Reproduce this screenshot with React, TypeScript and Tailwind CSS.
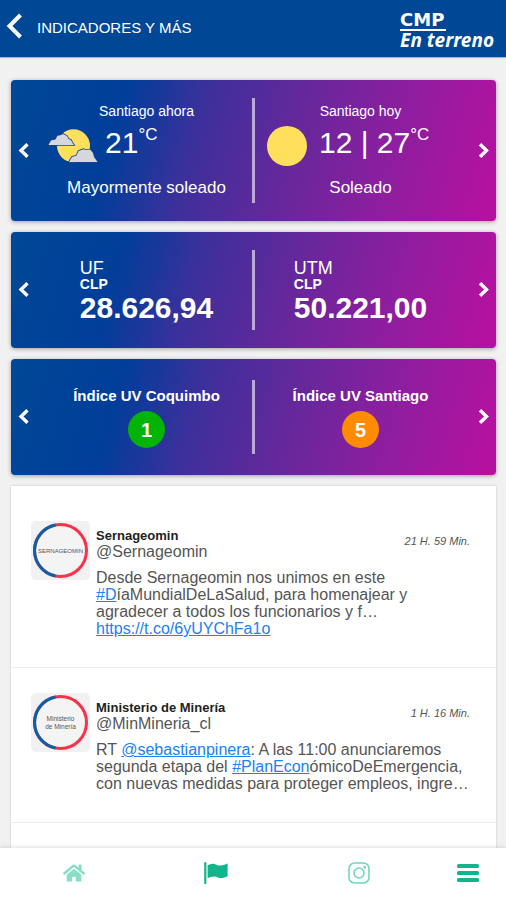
import type { ReactNode } from "react";
import { FaHome } from "react-icons/fa";

function Chevron({ dir }: { dir: "left" | "right" }) {
  return (
    <svg width="11" height="16" viewBox="0 0 11 16" fill="none" stroke="#fff" strokeWidth="3.4" aria-hidden="true">
      <path d={dir === "left" ? "M9.5 1.2 3 7.500l6.500 6.200" : "M2 1.200 8.500 7.500 2 13.700"} />
    </svg>
  );
}

function SlideCard({ left, right, divider }: { left: ReactNode; right: ReactNode; divider: string }) {
  return (
    <section className="flex items-stretch rounded bg-[linear-gradient(105deg,#004896_0%,#003e9a_22%,#1c379b_30%,#3c309b_38%,#5a2a9b_52%,#8a1f9f_75%,#b5119f_98%)] text-white shadow-[0_1px_4px_rgba(0,0,0,0.35)]">
      <button type="button" aria-label="Anterior" className="flex w-[30px] items-center pl-[7px]">
        <Chevron dir="left" />
      </button>
      <div className="min-w-0 flex-1">{left}</div>
      <div className={`w-[3px] bg-white/60 ${divider}`} />
      <div className="min-w-0 flex-1">{right}</div>
      <button type="button" aria-label="Siguiente" className="flex w-[30px] items-center justify-end pr-[7px]">
        <Chevron dir="right" />
      </button>
    </section>
  );
}

function Weather({ title, icon, temp, text }: { title: string; icon: ReactNode; temp: string; text: string }) {
  return (
    <div className="flex flex-col py-[23px]">
      <h2 className="text-center text-[14px] leading-[16px]">{title}</h2>
      <div className="mt-[7px] flex h-10 items-start">
        <div className="flex h-10 w-16 items-center justify-center">{icon}</div>
        <p className="flex items-start text-[30px] leading-[34px]">
          {temp}
          <span className="text-[17px] leading-[17px]">°C</span>
        </p>
      </div>
      <p className="mt-[12px] text-center text-[17px] leading-[20px]">{text}</p>
    </div>
  );
}

function Currency({ name, value }: { name: string; value: string }) {
  return (
    <div className="flex justify-center pt-[27px] pb-[24px]">
      <div>
        <h2 className="text-[18px] leading-[18px]">{name}</h2>
        <p className="text-[14px] leading-[15px] font-bold">CLP</p>
        <p className="text-[30px] leading-[32px] font-bold">{value}</p>
      </div>
    </div>
  );
}

function UvIndex({ city, value, color }: { city: string; value: number; color: string }) {
  return (
    <div className="flex flex-col items-center py-[27px]">
      <h2 className="text-[15px] leading-[20px] font-bold">Índice UV {city}</h2>
      <p className={`mt-[5px] flex size-[37px] items-center justify-center rounded-full text-[20px] leading-[20px] font-bold ${color}`}>
        {value}
      </p>
    </div>
  );
}

function CloudySun() {
  return (
    <svg width="50" height="34" viewBox="0 0 50 34" aria-hidden="true">
      <circle cx="25.500" cy="16.800" r="16.500" fill="#ffdf5c" />
      <g fill="#d6d7dc" stroke="#1f3f96" strokeWidth="1.600" style={{ paintOrder: "stroke" }}>
        <path d="M.5 16 3 11.500l4.500-1 2-3.800 3-.5 2.500-1.200 4 2 1.500 3 2.500 1 1.500 3 1.500 2z" />
        <path d="M21 33l3-5 4.500-1.500L30.500 22l5-1.800 2 .8 4.500-.5 3 3.500 1 4 3.500 5z" />
      </g>
    </svg>
  );
}

function Sun() {
  return (
    <svg width="40" height="40" viewBox="0 0 40 40" aria-hidden="true">
      <circle cx="20" cy="20" r="20" fill="#ffdf5c" />
    </svg>
  );
}

function Avatar({ lines }: { lines: string[] }) {
  return (
    <div className="grid size-[59px] shrink-0 place-items-center rounded-[5px] bg-[#f1f1f2]">
      <svg width="59" height="59" viewBox="0 0 59 59" aria-hidden="true">
        <circle cx="29.500" cy="29.500" r="26" fill="#f4f4f5" stroke="#fa3148" strokeWidth="3" />
        <path d="M24.500 4A26 26 0 0 0 24.500 55" fill="none" stroke="#0f5fa6" strokeWidth="3" />
        {lines.map((line, i) => (
          <text
            key={line}
            x="29.500"
            y={lines.length === 1 ? 32 : 28 + i * 8}
            textAnchor="middle"
            fontSize={lines.length === 1 ? 6 : 6.5}
            fontFamily="Liberation Sans, sans-serif"
            fill="#555"
          >
            {line}
          </text>
        ))}
      </svg>
    </div>
  );
}

function Tweet({ avatar, name, handle, time, children }: {
  avatar: string[]; name: string; handle: string; time: string; children: ReactNode;
}) {
  return (
    <article className="flex gap-[6px] border-b border-[#ececec] pt-[25px] pr-[26px] pb-[30px] pl-[20px]">
      <Avatar lines={avatar} />
      <div className="min-w-0 flex-1 pt-[7px]">
        <div className="flex justify-between">
          <div>
            <h3 className="text-[13px] leading-[16px] font-bold text-[#222]">{name}</h3>
            <p className="text-[16px] leading-[16px] text-[#555]">{handle}</p>
          </div>
          <time className="mt-[6px] text-[11px] leading-[14px] text-[#555] italic">{time}</time>
        </div>
        <p className="mt-[9px] text-[16px] leading-[17px] whitespace-nowrap text-[#555]">{children}</p>
      </div>
    </article>
  );
}

function Link({ children }: { children: ReactNode }) {
  return <a href="#" className="text-[#2080f5] underline">{children}</a>;
}

function FlagIcon() {
  return (
    <svg width="24" height="22" viewBox="0 0 24 22" fill="#12b48b" aria-hidden="true">
      <path d="M.2 1.200a1.100 1.100 0 0 1 2.200 0V21a1.100 1.100 0 0 1-2.200 0z" />
      <path d="M3.600 3.200C6 2 8.500 1.300 11 2.200c2 .7 3 1.400 5 1.300 2.500 0 5-1 7.600-2v12.800c-2.600 1.200-5 2-7.600 1.700-2.200-.2-3.200-1.300-5.400-1.500-2.400-.2-4.600.6-7 1.700z" />
    </svg>
  );
}

function CameraIcon() {
  return (
    <svg width="22" height="22" viewBox="0 0 22 22" fill="none" stroke="#6fd6b7" strokeWidth="1.500" aria-hidden="true">
      <rect x="1" y="1" width="20" height="20" rx="5.500" />
      <circle cx="11" cy="11" r="5" />
      <circle cx="16.800" cy="5.200" r=".6" />
    </svg>
  );
}

function MenuIcon() {
  return (
    <svg width="22" height="20" viewBox="0 0 22 20" fill="#12b48b" aria-hidden="true">
      <rect y="1" width="22" height="4" rx="1.500" />
      <rect y="8" width="22" height="4" rx="1.500" />
      <rect y="15" width="22" height="4" rx="1.500" />
    </svg>
  );
}

export default function App() {
  return (
    <div className="flex h-dvh flex-col bg-[#f1f1f1] font-['Liberation_Sans',Arial,sans-serif]">
      <header className="flex h-[57px] shrink-0 items-center bg-[#004896] pr-[12px] pl-[6px] text-white shadow-[0_1px_1px_rgba(0,0,0,0.25)]">
        <button type="button" aria-label="Volver" className="pb-[6px]">
          <svg width="17" height="26" viewBox="0 0 17 26" fill="none" stroke="#fff" strokeWidth="4" aria-hidden="true">
            <path d="M14.500 2 3.500 13l11 11" />
          </svg>
        </button>
        <h1 className="ml-[14px] flex-1 pb-[2px] text-[15px] leading-[20px]">INDICADORES Y MÁS</h1>
        <div className="mt-[2px] flex flex-col items-start">
          <span className="border-b-2 border-white pr-[2px] font-['DejaVu_Sans',sans-serif] text-[18px] leading-[18px] font-bold">CMP</span>
          <span className="font-['Noto_Sans',sans-serif] text-[19px] leading-[18px] font-bold italic">En terreno</span>
        </div>
      </header>

      <main className="flex min-h-0 flex-1 flex-col gap-[11px] overflow-y-auto pt-[23px] pr-[10px] pl-[11px] [scrollbar-width:none]">
        <SlideCard
          divider="my-[18px]"
          left={<Weather title="Santiago ahora" icon={<CloudySun />} temp="21" text="Mayormente soleado" />}
          right={<Weather title="Santiago hoy" icon={<Sun />} temp="12 | 27" text="Soleado" />}
        />
        <SlideCard
          divider="my-[18px]"
          left={<Currency name="UF" value="28.626,94" />}
          right={<Currency name="UTM" value="50.221,00" />}
        />
        <SlideCard
          divider="my-[21px]"
          left={<UvIndex city="Coquimbo" value={1} color="bg-[#04b404]" />}
          right={<UvIndex city="Santiago" value={5} color="bg-[#ff8c00]" />}
        />
        <section className="flex-1 bg-white pt-[10px] shadow-[0_0_2px_rgba(0,0,0,0.2)]">
          <Tweet avatar={["SERNAGEOMIN"]} name="Sernageomin" handle="@Sernageomin" time="21 H. 59 Min.">
            Desde Sernageomin nos unimos en este
            <br />
            <Link>#D</Link>íaMundialDeLaSalud, para homenajear y
            <br />
            agradecer a todos los funcionarios y f…
            <br />
            <Link>https://t.co/6yUYChFa1o</Link>
          </Tweet>
          <Tweet avatar={["Ministerio", "de Minería"]} name="Ministerio de Minería" handle="@MinMineria_cl" time="1 H. 16 Min.">
            RT <Link>@sebastianpinera</Link>: A las 11:00 anunciaremos
            <br />
            segunda etapa del <Link>#PlanEcon</Link>ómicoDeEmergencia,
            <br />
            con nuevas medidas para proteger empleos, ingre…
          </Tweet>
        </section>
      </main>

      <nav className="relative flex h-[52px] shrink-0 items-center bg-white pb-[3px] pl-[3px] shadow-[0_-1px_4px_rgba(0,0,0,0.12)]">
        <a href="#" aria-label="Inicio" className="flex flex-1 justify-center">
          <FaHome size={22} color="#88dfc5" />
        </a>
        <a href="#" aria-label="Noticias" className="flex flex-1 justify-center">
          <FlagIcon />
        </a>
        <a href="#" aria-label="Instagram" className="flex flex-1 justify-center">
          <CameraIcon />
        </a>
        <button type="button" aria-label="Menú" className="flex w-[76px] justify-center">
          <MenuIcon />
        </button>
      </nav>
    </div>
  );
}
